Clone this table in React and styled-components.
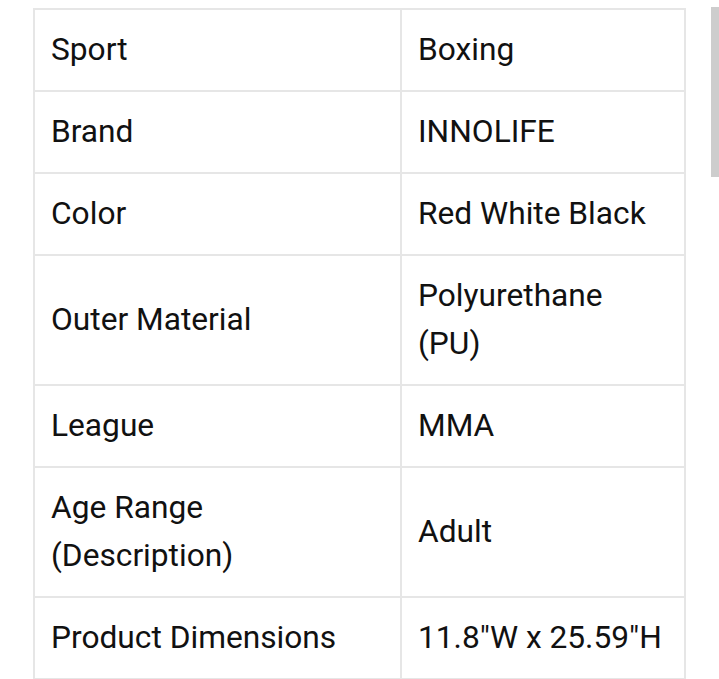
import styled, { createGlobalStyle } from 'styled-components';

const GlobalStyle = createGlobalStyle`
    html, body {
        margin: 0;
        padding: 0;
        background: #ffffff;
        overflow: hidden;
    }
`;

const Page = styled.div`
    padding: 8px 0 0 33px;
    font-family: Roboto, "Noto Sans", sans-serif;
    color: #111111;
`;

const DetailsTable = styled.table`
    width: 653px;
    border-collapse: collapse;
    table-layout: fixed;
`;

const LabelCol = styled.col`
    width: 367px;
`;

const Cell = styled.td`
    border: 2px solid #e6e6e6;
    padding: 16px 16px;
    font-size: 31.7px;
    line-height: 48px;
    vertical-align: middle;
`;

const ScrollThumb = styled.div`
    position: fixed;
    right: 0;
    top: 7px;
    width: 8px;
    height: 170px;
    background: #cdcdcd;
`;

const rows = [
    ['Sport', 'Boxing'],
    ['Brand', 'INNOLIFE'],
    ['Color', 'Red White Black'],
    ['Outer Material', 'Polyurethane (PU)'],
    ['League', 'MMA'],
    ['Age Range (Description)', 'Adult'],
    ['Product Dimensions', '11.8"W x 25.59"H'],
];

const App = () => {
    return (
        <Page>
            <GlobalStyle />
            <DetailsTable>
                <colgroup>
                    <LabelCol />
                    <col />
                </colgroup>
                <tbody>
                    {rows.map(([label, value]) => (
                        <tr key={label}>
                            <Cell>{label}</Cell>
                            <Cell>{value}</Cell>
                        </tr>
                    ))}
                </tbody>
            </DetailsTable>
            <ScrollThumb />
        </Page>
    );
};

export default App;
